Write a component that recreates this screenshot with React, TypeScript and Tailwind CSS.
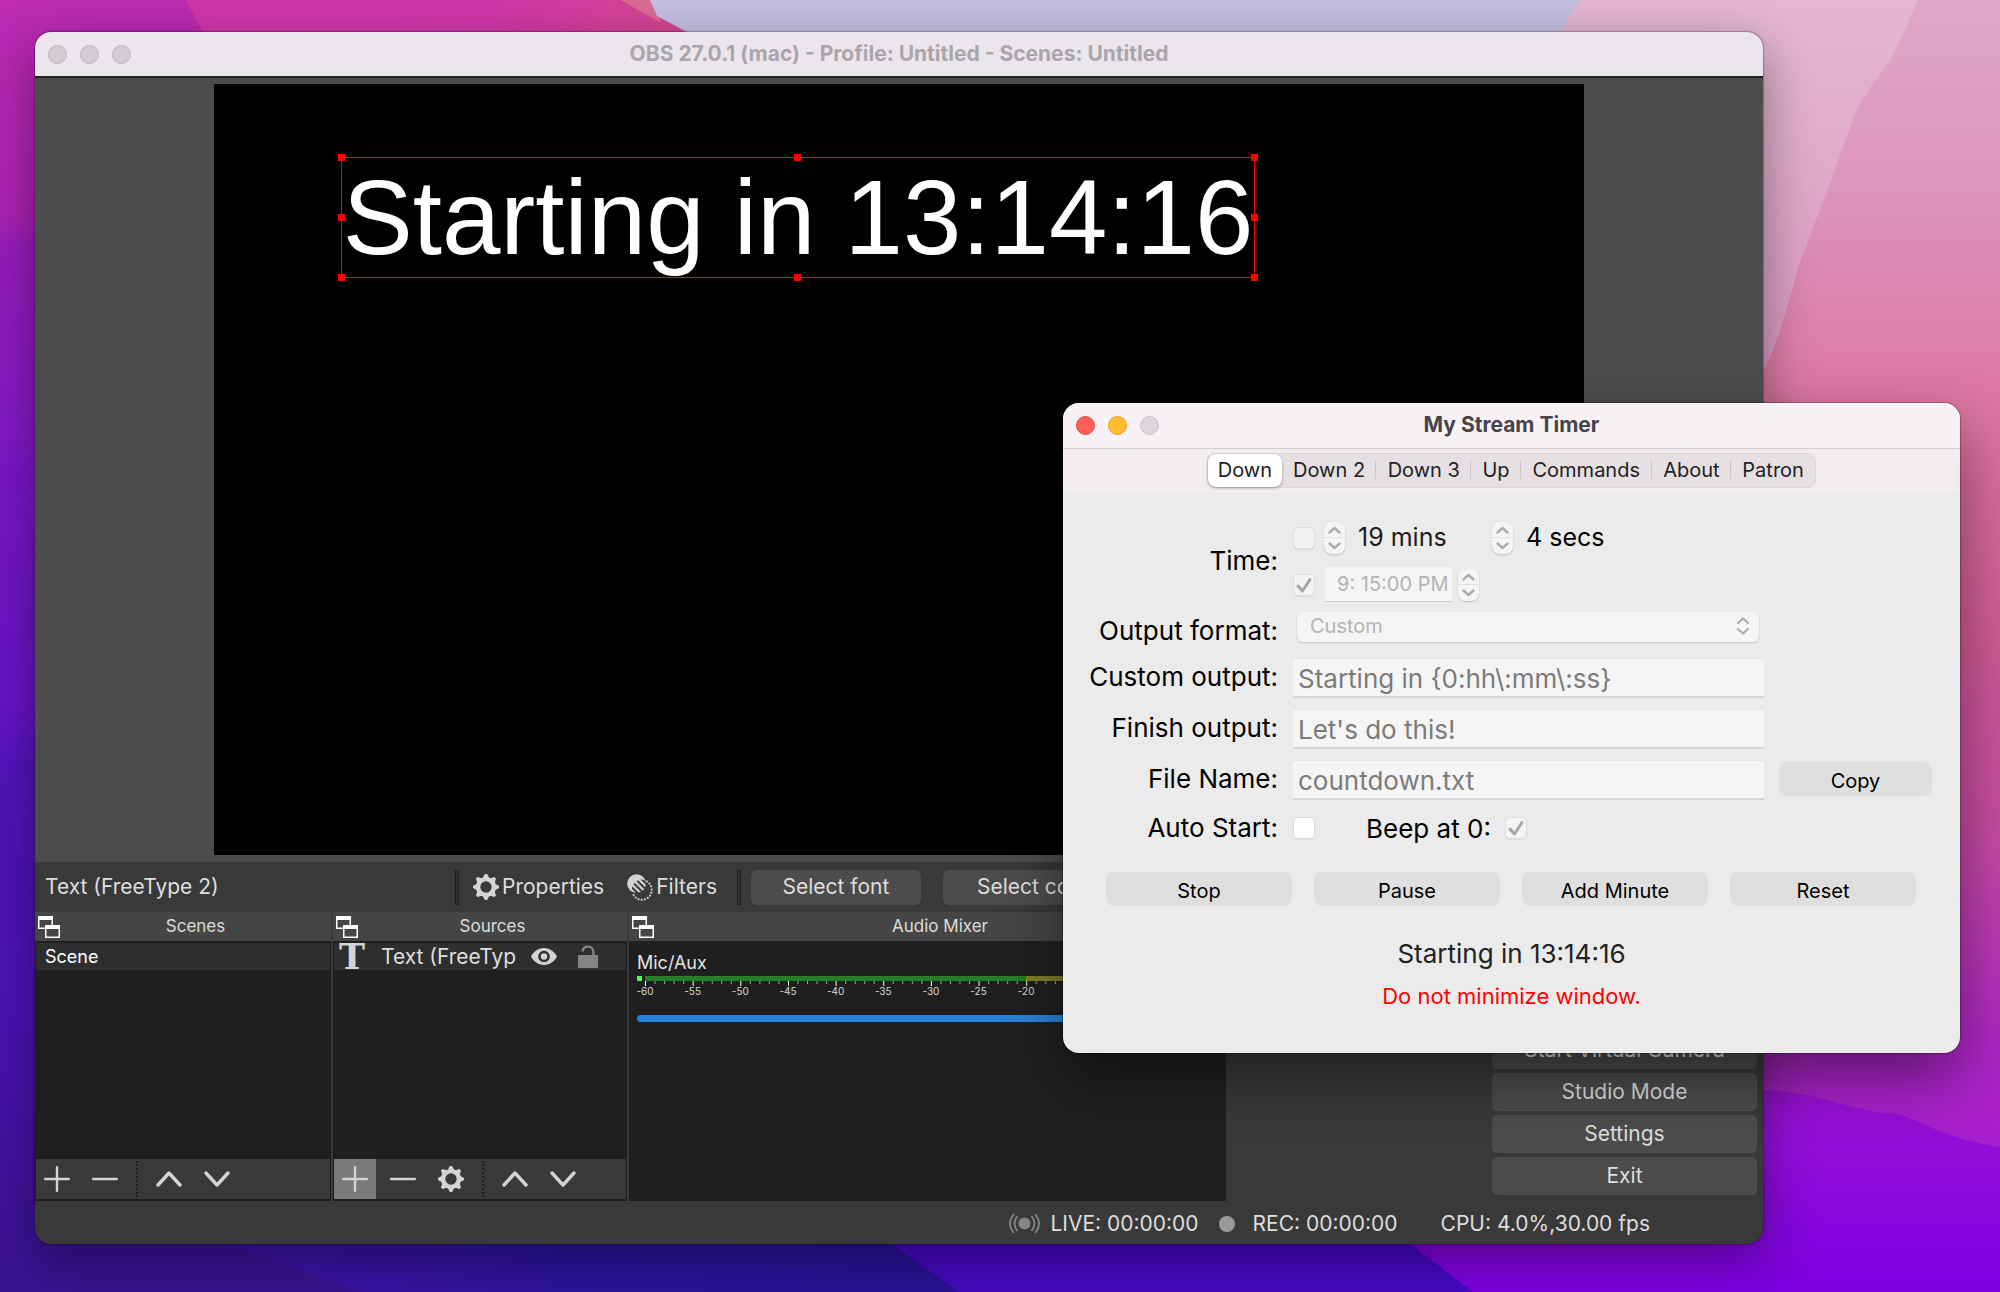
import React, { useState } from "react";

/* ---------- Icons ---------- */

function GearIcon({ className = "" }: { className?: string }) {
  const teeth = [0, 45, 90, 135, 180, 225, 270, 315];
  return (
    <svg viewBox="0 0 26 26" className={className} aria-hidden="true">
      <circle cx="13" cy="13" r="7.9" fill="none" stroke="currentColor" strokeWidth="4.4" />
      {teeth.map((a) => (
        <path key={a} d="M9.6 4.6 L11.4 0.8 Q11.6 0 12.3 0 H13.7 Q14.4 0 14.6 0.8 L16.4 4.6 Z" fill="currentColor" transform={`rotate(${a} 13 13)`} />
      ))}
    </svg>
  );
}

function FilterIcon({ className = "" }: { className?: string }) {
  const dots = Array.from({ length: 12 }, (_, i) => (-60 + i * 19) * (Math.PI / 180));
  return (
    <svg viewBox="0 0 26 27" className={className} aria-hidden="true">
      <defs>
        <clipPath id="filter-overlap">
          <circle cx="15" cy="16" r="10.4" />
        </clipPath>
      </defs>
      <circle cx="9.6" cy="9.6" r="9.4" fill="currentColor" />
      <g clipPath="url(#filter-overlap)" stroke="#3a3a3a" strokeWidth="2">
        <path d="M3 11.500L17 25.500M6 8.500L20 22.500M9 5.500L23 19.500M12.500 3L24 14.500" />
      </g>
      {dots.map((a) => (
        <circle key={a} cx={15 + 9.8 * Math.cos(a)} cy={16 + 9.8 * Math.sin(a)} r="1.1" fill="currentColor" />
      ))}
    </svg>
  );
}

function FloatIcon() {
  return (
    <svg viewBox="0 0 22 22" className="size-[22px]" aria-hidden="true">
      <rect x="0.75" y="0.75" width="13.5" height="11.5" fill="#454545" stroke="#fff" strokeWidth="1.5" />
      <rect x="0" y="0" width="15" height="4" fill="#fff" />
      <rect x="7.75" y="9.75" width="13.5" height="11.5" fill="#454545" stroke="#fff" strokeWidth="1.5" />
      <rect x="7" y="9" width="15" height="4" fill="#fff" />
    </svg>
  );
}

function EyeIcon() {
  return (
    <svg viewBox="0 0 26 17" className="h-[17px] w-[26px] text-[#d2d2d2]" aria-hidden="true">
      <path fillRule="evenodd" fill="currentColor" d="M0 8.5C3 3 7.6 0 13 0s10 3 13 8.500C23 14 18.400 17 13 17S3 14 0 8.500ZM13 2.700a5.800 5.800 0 1 0 0 11.600a5.800 5.800 0 0 0 0-11.600Z" />
      <circle cx="13" cy="8.500" r="3.200" fill="currentColor" />
    </svg>
  );
}

function LockIcon() {
  return (
    <svg viewBox="0 0 20 23" className="h-[23px] w-[20px] text-[#858585]" aria-hidden="true">
      <rect x="0" y="10" width="20" height="13" rx="0.500" fill="currentColor" />
      <path d="M4.600 6.400C4.600 0 15.400 0 15.400 7V11" fill="none" stroke="currentColor" strokeWidth="2.400" />
    </svg>
  );
}

const toolPaths = {
  plus: "M13 1.200V24.800M1.200 13H24.800",
  minus: "M1.200 13H24.800",
  up: "M2 19L13 7L24 19",
  down: "M2 7L13 19L24 7",
};

function ToolButton({ kind, label, active = false }: { kind: keyof typeof toolPaths | "gear"; label: string; active?: boolean }) {
  return (
    <button type="button" aria-label={label} className={`flex h-10 w-[42px] items-center justify-center text-[#d4d4d4] ${active ? "bg-[#7a7a7a]" : ""}`}>
      {kind === "gear" ? (
        <GearIcon className="size-[26px]" />
      ) : (
        <svg viewBox="0 0 26 26" className="size-[26px]" aria-hidden="true">
          <path d={toolPaths[kind]} fill="none" stroke="currentColor" strokeWidth={kind === "up" || kind === "down" ? 3.4 : 2.4} strokeLinecap="round" strokeLinejoin="round" />
        </svg>
      )}
    </button>
  );
}

function LiveIcon() {
  return (
    <svg viewBox="0 0 31 21" className="h-[21px] w-[31px] text-[#858585]" aria-hidden="true">
      <circle cx="15.500" cy="10.500" r="6" fill="currentColor" />
      <g fill="none" stroke="currentColor" strokeWidth="1.800">
        <path d="M8.500 3Q2.500 10.500 8.500 18M5 1Q-3 10.500 5 20M22.500 3Q28.500 10.500 22.500 18M26 1Q34 10.500 26 20" />
      </g>
    </svg>
  );
}

/* ---------- Desktop wallpaper ---------- */

function Wallpaper() {
  return (
    <svg className="absolute inset-0 size-full" viewBox="0 0 2000 1292" preserveAspectRatio="none" aria-hidden="true">
      <defs>
        <linearGradient id="left" x1="0" y1="0" x2="0" y2="1">
          <stop offset="0" stopColor="#bd2bb2" />
          <stop offset="0.17" stopColor="#a922b2" />
          <stop offset="0.19" stopColor="#971dbb" />
          <stop offset="0.34" stopColor="#8218c6" />
          <stop offset="0.36" stopColor="#7a16c8" />
          <stop offset="0.55" stopColor="#6614c4" />
          <stop offset="0.6" stopColor="#5213bb" />
          <stop offset="0.78" stopColor="#4a13b6" />
          <stop offset="1" stopColor="#38128e" />
        </linearGradient>
        <linearGradient id="magenta" x1="0" y1="0" x2="1" y2="0">
          <stop offset="0" stopColor="#cf36ab" />
          <stop offset="0.6" stopColor="#d036a8" />
          <stop offset="1" stopColor="#d6488f" />
        </linearGradient>
        <linearGradient id="right" x1="0" y1="0" x2="0" y2="1">
          <stop offset="0" stopColor="#dfa8c8" />
          <stop offset="0.15" stopColor="#dc94bd" />
          <stop offset="0.32" stopColor="#dc75a0" />
          <stop offset="0.5" stopColor="#d05a94" />
          <stop offset="0.65" stopColor="#c64aa4" />
          <stop offset="0.8" stopColor="#b028c4" />
          <stop offset="1" stopColor="#9a10dc" />
        </linearGradient>
        <linearGradient id="pale" x1="0" y1="0" x2="0" y2="1">
          <stop offset="0" stopColor="#e4b8d0" />
          <stop offset="1" stopColor="#d07cb0" />
        </linearGradient>
        <linearGradient id="violet" x1="0" y1="0" x2="0" y2="1">
          <stop offset="0" stopColor="#9a12d4" />
          <stop offset="1" stopColor="#7c00e2" />
        </linearGradient>
        <linearGradient id="indigo" x1="0" y1="0" x2="1" y2="0">
          <stop offset="0" stopColor="#3f12a8" />
          <stop offset="0.5" stopColor="#2a149c" />
          <stop offset="1" stopColor="#2a1296" />
        </linearGradient>
      </defs>
      <rect width="2000" height="1292" fill="url(#left)" />
      <path d="M185 0H700V60H220Z" fill="url(#magenta)" />
      <path d="M620 0H660V22Z" fill="#dc6a92" />
      <path d="M650 0H1600V60H730L687 32L657 16Z" fill="#c4bfe0" />
      <path d="M1580 0H2000V700H1560V32Z" fill="url(#pale)" />
      <path d="M1918 0C1906 25 1898 50 1886 66C1872 85 1860 100 1850 128C1838 160 1830 185 1820 210C1808 240 1798 265 1790 297C1782 325 1775 350 1763 371L1740 400V1292H2000V0Z" fill="url(#right)" />
      <path d="M215 1240L360 1292H980L880 1230Z" fill="url(#indigo)" />
      <path d="M880 1236L960 1292H1490L1400 1236Z" fill="#4609c2" />
      <path d="M1400 1236L1473 1292H2000V1147C1930 1136 1920 1116 1890 1113C1840 1110 1820 1088 1740 1090V1236Z" fill="url(#violet)" />
    </svg>
  );
}

/* ---------- OBS window ---------- */

function Dock({ title, children }: { title: string; children: React.ReactNode }) {
  return (
    <section className="flex min-w-0 flex-col bg-[#1f1f1f]">
      <header className="flex h-[29px] shrink-0 items-center bg-[#454545] pl-[3px]">
        <FloatIcon />
        <h2 className="flex-1 text-center text-[17px] text-[#dcdcdc]">{title}</h2>
      </header>
      {children}
    </section>
  );
}

function Grip() {
  return <span className="h-[35px] w-1 border border-[#1e1e1e] bg-[#303030]" />;
}

function Meter() {
  const unit = 9.53;
  const ticks = Array.from({ length: 61 }, (_, i) => i);
  return (
    <svg width="588" height="22" className="block shrink-0" role="img" aria-label="Mic/Aux level">
      <rect x="0" y="0" width="5" height="5" fill="#4cff4c" />
      <rect x="8" y="0" width="381" height="5" fill="#267f26" />
      <rect x="389" y="0" width="105" height="5" fill="#7f7f26" />
      <rect x="494" y="0" width="86" height="5" fill="#7f2626" />
      {ticks.map((i) => (
        <rect key={i} x={8 + i * unit} y="5" width="1" height={i % 5 === 0 ? 5 : 3} fill={i % 5 === 0 ? "#fff" : "#a0a0a0"} />
      ))}
      {ticks.filter((i) => i % 5 === 0).map((i) => (
        <text key={i} x={8 + i * unit} y="19" fontSize="10" textAnchor="middle" fill="#d8d8d8">
          {i - 60}
        </text>
      ))}
    </svg>
  );
}

function ObsWindow() {
  const handles = [
    "-left-1 -top-1",
    "left-1/2 -top-1 -ml-1",
    "-right-1 -top-1",
    "-left-1 top-1/2 -mt-1",
    "-right-1 top-1/2 -mt-1",
    "-left-1 -bottom-1",
    "left-1/2 -bottom-1 -ml-1",
    "-right-1 -bottom-1",
  ];
  return (
    <main className="absolute top-8 right-[237px] bottom-12 left-[35px] flex flex-col overflow-hidden rounded-2xl bg-[#393939] text-[#dedede] shadow-[0_16px_50px_rgba(0,0,0,0.4),0_0_1px_1px_rgba(0,0,0,0.25)]">
      <header className="grid h-[46px] shrink-0 grid-cols-[1fr_auto_1fr] items-center border-b-2 border-[#222] bg-[#ebe5ec] px-[13px]">
        <div className="flex gap-[13px]">
          {["Close", "Minimize", "Zoom"].map((l) => (
            <button key={l} type="button" aria-label={l} className="size-[19px] rounded-full border border-[#bdb8be] bg-[#d1ccd2]" />
          ))}
        </div>
        <h1 className="text-[21px] leading-7 font-bold text-[#aaa5ab]">OBS 27.0.1 (mac) - Profile: Untitled - Scenes: Untitled</h1>
      </header>

      <div className="flex min-h-0 flex-1 justify-center bg-[#4c4c4c] pt-[6px] pb-[7px]">
        <div className="relative aspect-video h-full bg-black">
          <div className="absolute top-[73px] left-[127px] border border-[#f00] px-px whitespace-nowrap">
            <p className="font-['Liberation_Sans',sans-serif] text-[105px] leading-[119px] text-white">Starting in 13:14:16</p>
            {handles.map((h) => (
              <span key={h} className={`absolute size-[7px] bg-[#f00] ${h}`} />
            ))}
          </div>
        </div>
      </div>

      <div className="flex h-[50px] shrink-0 items-center pl-[10px] text-[21px]">
        <span className="w-[410px]">Text (FreeType 2)</span>
        <Grip />
        <button type="button" className="ml-[14px] flex items-center gap-[3px]">
          <GearIcon className="size-[26px] text-[#d4d4d4]" />
          Properties
        </button>
        <button type="button" className="ml-[23px] flex items-center gap-[3px]">
          <FilterIcon className="h-[27px] w-[26px] text-[#d4d4d4]" />
          Filters
        </button>
        <span className="ml-5 flex">
          <Grip />
        </span>
        <button type="button" className="ml-[10px] h-[35px] w-[170px] rounded-md bg-[#4c4c4c]">Select font</button>
        <button type="button" className="ml-[22px] h-[35px] w-[186px] rounded-md bg-[#4c4c4c]">Select color</button>
      </div>

      <div className="grid h-[289px] shrink-0 grid-cols-[296fr_294fr_597fr_258fr_275fr] gap-[2px]">
        <Dock title="Scenes">
          <ul className="flex-1 p-px pt-[2px]">
            <li className="flex h-[27px] items-center bg-[#2e2e2e] pl-[9px] text-lg text-white">Scene</li>
          </ul>
          <div className="mx-px mb-[2px] flex h-10 items-center gap-[6px] bg-[#393939]">
            <ToolButton kind="plus" label="Add scene" />
            <ToolButton kind="minus" label="Remove scene" />
            <span className="mx-1 h-9 border-l-2 border-dotted border-[#1e1e1e]" />
            <ToolButton kind="up" label="Move scene up" />
            <ToolButton kind="down" label="Move scene down" />
          </div>
        </Dock>

        <Dock title="Sources">
          <ul className="flex-1 p-px pt-[2px]">
            <li className="flex h-[27px] items-center bg-[#2e2e2e] pl-[5px] text-[21px]">
              <span className="w-[42px] font-['DejaVu_Serif',serif] text-[35px] leading-[27px] font-bold text-[#d4d4d4]">T</span>
              <span className="w-[150px]">Text (FreeTyp</span>
              <EyeIcon />
              <span className="ml-[21px]">
                <LockIcon />
              </span>
            </li>
          </ul>
          <div className="mx-px mb-[2px] flex h-10 items-center gap-[6px] bg-[#393939]">
            <ToolButton kind="plus" label="Add source" active />
            <ToolButton kind="minus" label="Remove source" />
            <ToolButton kind="gear" label="Source properties" />
            <span className="mx-1 h-9 border-l-2 border-dotted border-[#1e1e1e]" />
            <ToolButton kind="up" label="Move source up" />
            <ToolButton kind="down" label="Move source down" />
          </div>
        </Dock>

        <Dock title="Audio Mixer">
          <div className="flex flex-col pt-2 pr-px pl-2">
            <label htmlFor="mic" className="text-lg leading-[27px] text-[#e4e4e4]">Mic/Aux</label>
            <Meter />
            <input id="mic" type="range" defaultValue={100} className="mt-[17px] h-[7px] w-full appearance-none rounded-full bg-[#2a82da]" />
          </div>
        </Dock>

        <div />

        <nav className="flex flex-col justify-end gap-1 pr-[6px] pb-[6px] pl-1">
          {["Start Virtual Camera", "Studio Mode", "Settings", "Exit"].map((l) => (
            <button key={l} type="button" className="h-[38px] rounded-[5px] bg-[#4c4c4c] text-[21px]">
              {l}
            </button>
          ))}
        </nav>
      </div>

      <footer className="flex h-[43px] shrink-0 items-center justify-end pt-[2px] pr-[113px] text-[21px]">
        <LiveIcon />
        <span className="ml-[10px]">LIVE: 00:00:00</span>
        <span className="ml-5 size-4 rounded-full bg-[#999]" />
        <span className="ml-[18px]">REC: 00:00:00</span>
        <span className="ml-[43px]">CPU: 4.0%,30.00 fps</span>
      </footer>
    </main>
  );
}

/* ---------- Timer window ---------- */

function Check({ id, label, checked = false, bright = false }: { id: string; label?: string; checked?: boolean; bright?: boolean }) {
  return (
    <span className="relative inline-flex size-[22px] shrink-0">
      <input
        id={id}
        aria-label={label}
        type="checkbox"
        defaultChecked={checked}
        disabled={!bright}
        className={`size-[22px] appearance-none rounded-[5px] border border-[#dcdcdc] shadow-[0_1px_1px_rgba(0,0,0,0.06)] ${bright ? "bg-white" : "bg-[#f4f4f4]"}`}
      />
      {checked && (
        <svg viewBox="0 0 22 22" className="pointer-events-none absolute inset-0" aria-hidden="true">
          <path d="M5 12L9.500 17L17 5.500" fill="none" stroke="#a6a6a6" strokeWidth="3" strokeLinecap="round" strokeLinejoin="round" />
        </svg>
      )}
    </span>
  );
}

function Stepper({ label }: { label: string }) {
  return (
    <span className="flex w-[21px] shrink-0 flex-col divide-y divide-[#dedede] rounded-lg bg-[#f5f5f5] shadow-[0_1px_2px_rgba(0,0,0,0.2)]">
      {["M5.500 10.500L10.500 6L15.500 10.500", "M5.500 5.500L10.500 10L15.500 5.500"].map((d, i) => (
        <button key={d} type="button" disabled aria-label={`${i ? "Decrease" : "Increase"} ${label}`} className="h-4">
          <svg viewBox="0 0 21 16" className="h-4 w-[21px]" aria-hidden="true">
            <path d={d} fill="none" stroke="#adadad" strokeWidth="2.400" strokeLinecap="round" strokeLinejoin="round" />
          </svg>
        </button>
      ))}
    </span>
  );
}

const tabs = ["Down", "Down 2", "Down 3", "Up", "Commands", "About", "Patron"];

function TimerWindow() {
  const [tab, setTab] = useState("Down");
  const label = "text-right text-[26px] leading-[32px] text-black whitespace-nowrap";
  const field = "h-10 w-full border-t border-b-2 border-t-[#e6e6e6] border-b-[#d6d6d6] bg-[#f5f5f5] px-[5px] pt-[2px] text-[26px] text-[#7b7b7b] outline-none";
  const button = "h-[34px] rounded-lg bg-[#dfdfdf] pt-1 text-xl text-black";
  return (
    <section className="absolute top-[403px] right-10 left-[1063px] overflow-hidden rounded-2xl bg-[#ebebeb] pb-[42px] shadow-[0_26px_60px_rgba(0,0,0,0.45),0_0_1px_1px_rgba(0,0,0,0.25)]">
      <header className="grid h-[46px] grid-cols-[1fr_auto_1fr] items-center border-b border-[#d2ccd2] bg-[#f8f2f7] px-[13px]">
        <div className="flex gap-[13px]">
          <button type="button" aria-label="Close timer" className="size-[19px] rounded-full border border-[#e2463f] bg-[#fe5f57]" />
          <button type="button" aria-label="Minimize timer" className="size-[19px] rounded-full border border-[#e0a123] bg-[#febc2e]" />
          <button type="button" aria-label="Zoom timer" className="size-[19px] rounded-full border border-[#c8c3c8] bg-[#dcd7dc]" />
        </div>
        <h2 className="pb-[2px] text-[21px] leading-7 font-bold text-[#464447]">My Stream Timer</h2>
      </header>

      <div className="flex h-[44px] justify-center bg-[#f3edf2] pt-1">
        <div role="tablist" className="grid h-[35px] w-[609px] grid-cols-[74fr_95fr_95fr_50fr_131fr_80fr_84fr] rounded-lg border border-[#ddd7dc] bg-[#e6e0e5]">
          {tabs.map((t, i) => (
            <button
              key={t}
              type="button"
              role="tab"
              aria-selected={t === tab}
              onClick={() => setTab(t)}
              className={`relative flex items-center justify-center pb-[2px] text-xl text-[#222] ${t === tab ? "rounded-lg bg-white shadow-[0_1px_3px_rgba(0,0,0,0.35)]" : ""}`}
            >
              {t}
              {i > 0 && i < 6 && <span className="absolute right-0 h-[19px] w-px bg-[#cbc5ca]" />}
            </button>
          ))}
        </div>
      </div>

      <form className="pt-[27px]" onSubmit={(e) => e.preventDefault()}>
        <div className="grid grid-cols-[215px_471px_1fr] gap-x-[15px]">
          <span className={`${label} self-center`}>Time:</span>
          <div className="flex flex-col gap-3">
            <div className="flex h-[35px] items-center">
              <Check id="use-duration" label="Use duration" />
              <span className="ml-[9px] flex">
                <Stepper label="minutes" />
              </span>
              <output className="ml-[13px] w-[134px] text-[25px] text-[#1c1c1c]">19 mins</output>
              <Stepper label="seconds" />
              <output className="ml-[13px] text-[25px] text-black">4 secs</output>
            </div>
            <div className="flex h-[35px] items-center">
              <Check id="use-time" label="Use time of day" checked />
              <input aria-label="End time" disabled defaultValue="9: 15:00 PM" className="ml-[10px] h-[35px] w-[127px] border-b border-[#cfcfcf] bg-[#f5f5f5] pl-3 text-xl text-[#b4b4b4]" />
              <span className="ml-[6px] flex">
                <Stepper label="end time" />
              </span>
            </div>
          </div>
          <span />

          <label htmlFor="format" className={`${label} mt-[13px]`}>Output format:</label>
          <div className="relative mt-[10px] h-[30px] pr-[5px] pl-[4px]">
            <select id="format" disabled className="h-[30px] w-full appearance-none rounded-md bg-[#f5f5f5] px-[13px] pb-1 text-xl text-[#b4b4b4] opacity-100 shadow-[0_1px_2px_rgba(0,0,0,0.18)]">
              <option>Custom</option>
            </select>
            <svg viewBox="0 0 14 20" className="pointer-events-none absolute top-1 right-[14px] h-5 w-[14px]" aria-hidden="true">
              <path d="M2 7L7 2.500L12 7M2 13L7 17.500L12 13" fill="none" stroke="#adadad" strokeWidth="2.200" strokeLinecap="round" strokeLinejoin="round" />
            </svg>
          </div>
          <span />

          <label htmlFor="custom" className={`${label} mt-[14px]`}>Custom output:</label>
          <input id="custom" className={`${field} mt-[11px]`} defaultValue={"Starting in {0:hh\\:mm\\:ss}"} />
          <span />

          <label htmlFor="finish" className={`${label} mt-[14px]`}>Finish output:</label>
          <input id="finish" className={`${field} mt-[11px]`} defaultValue="Let's do this!" />
          <span />

          <label htmlFor="file" className={`${label} mt-[14px]`}>File Name:</label>
          <input id="file" className={`${field} mt-[11px]`} defaultValue="countdown.txt" />
          <button type="button" className={`${button} mt-[13px] mr-7`}>Copy</button>

          <label htmlFor="auto" className={`${label} mt-3`}>Auto Start:</label>
          <div className="mt-3 flex h-8 items-center">
            <Check id="auto" bright />
            <label htmlFor="beep" className="mr-[14px] ml-[51px] text-[26px] text-black">Beep at 0:</label>
            <Check id="beep" checked />
          </div>
          <span />
        </div>

        <div className="mt-7 mr-11 ml-[43px] grid grid-cols-4 gap-x-[22px]">
          {["Stop", "Pause", "Add Minute", "Reset"].map((l) => (
            <button key={l} type="button" className={button}>{l}</button>
          ))}
        </div>
      </form>

      <p className="mt-8 text-center text-[26px] leading-8 text-[#222]">Starting in 13:14:16</p>
      <p className="mt-[11px] text-center text-[22px] leading-[30px] text-[#f00]">Do not minimize window.</p>
    </section>
  );
}

export default function App() {
  return (
    <div className="relative h-screen overflow-hidden font-['Inter',sans-serif]">
      <Wallpaper />
      <ObsWindow />
      <TimerWindow />
    </div>
  );
}
